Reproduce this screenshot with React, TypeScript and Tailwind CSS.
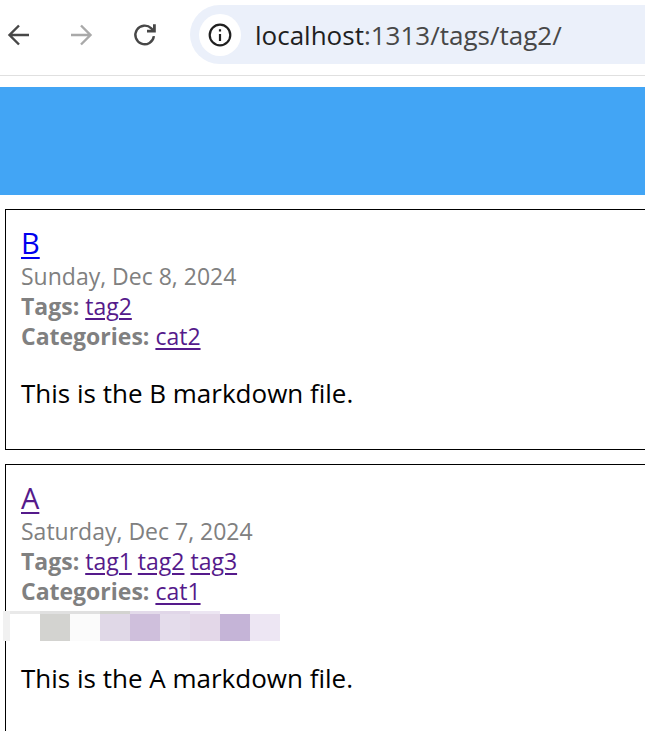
import type { ReactNode } from "react";

const topCells = [
  "w-[30px] bg-[#e9e9e9]",
  "w-[60px] bg-[#e0e0e0]",
  "w-[30px] bg-[#d3d3d0]",
  "w-[30px] bg-[#e3daea]",
  "w-[30px] bg-[#e0d6e8]",
  "w-[30px] bg-[#ece5f2]",
];

const cells = [
  "bg-white",
  "bg-[#d3d3d0]",
  "bg-[#fbfbfb]",
  "bg-[#e0d8e7]",
  "bg-[#cfbfdc]",
  "bg-[#e4dceb]",
  "bg-[#e3d7e8]",
  "bg-[#c5b4d7]",
  "bg-[#ede6f3]",
];

function Mosaic() {
  return (
    <div className="relative h-[30px]">
      <div className="absolute top-[5px] -left-[18px] flex h-[30px]" aria-hidden="true">
        <div className="w-[7px] bg-[#f1f1f1]" />
        <div>
          <div className="flex h-[3px] w-[270px] bg-white">
            {topCells.map((c) => (
              <div key={c} className={c} />
            ))}
          </div>
          <div className="flex h-[27px]">
            {cells.map((c) => (
              <div key={c} className={`w-[30px] ${c}`} />
            ))}
          </div>
        </div>
      </div>
    </div>
  );
}

function TermLinks({ label, base, terms }: { label: string; base: string; terms: string[] }) {
  return (
    <div className="flex gap-1.5">
      <strong className="font-bold">{label}:</strong>
      {terms.map((t) => (
        <a key={t} href={`#/${base}/${t}`} className="text-[#551a8b] underline decoration-2 underline-offset-3">
          {t}
        </a>
      ))}
    </div>
  );
}

type PostProps = {
  title: string;
  titleColor: string;
  date: string;
  tags: string[];
  categories: string[];
  children?: ReactNode;
};

function Post({ title, titleColor, date, tags, categories, children }: PostProps) {
  return (
    <article className="ml-[5px] border-y border-l border-black px-[15px] pt-[15px] pb-[38px]">
      <h2 className="text-[29px] leading-9">
        <a href={`#/${title}`} className={`underline decoration-2 underline-offset-3 ${titleColor}`}>
          {title}
        </a>
      </h2>
      <div className="text-[23px] leading-[30px] text-[#808080]">
        <div>{date}</div>
        <TermLinks label="Tags" base="tags" terms={tags} />
        <TermLinks label="Categories" base="categories" terms={categories} />
        {children}
      </div>
      <p className="mt-6 text-[26px] leading-9">This is the {title} markdown file.</p>
    </article>
  );
}

export default function App() {
  return (
    <div className="h-screen overflow-hidden bg-white font-['Segoe_UI','Open_Sans',sans-serif] text-black">
      <header className="flex h-[76px] items-start border-b border-[#e0e0e0] pt-[5px]">
        <nav className="flex h-[59px] flex-1 items-center">
          <div className="flex w-[190px] shrink-0 items-center gap-[35px] pl-1">
            <button type="button" aria-label="Back" className="text-[#474747]">
              <svg viewBox="0 0 28 28" className="size-7" fill="none" stroke="currentColor" strokeWidth="2.4">
                <path d="M25 14H6M15 4.5 5.5 14l9.5 9.5" />
              </svg>
            </button>
            <button type="button" aria-label="Forward" className="text-[#a9a9a9]">
              <svg viewBox="0 0 28 28" className="size-7" fill="none" stroke="currentColor" strokeWidth="2.4">
                <path d="M4 14h19M14 4.5l9.5 9.5-9.5 9.5" />
              </svg>
            </button>
            <button type="button" aria-label="Reload" className="text-[#474747]">
              <svg viewBox="0 0 28 28" className="size-7" fill="none" stroke="currentColor" strokeWidth="2.4">
                <path d="M23.9 15.2A9.3 9.3 0 1 1 21.3 7.4L23.6 9.8" />
                <path d="M24.4 3.2v6.9H17" strokeWidth="2.8" />
              </svg>
            </button>
          </div>
          <div className="flex h-[59px] flex-1 items-center gap-[14px] rounded-l-full bg-[#ebf0fa] pl-[9px]">
            <button
              type="button"
              aria-label="Site information"
              className="flex size-[42px] items-center justify-center rounded-full bg-white text-[#1f1f1f]"
            >
              <svg viewBox="0 0 24 24" className="size-6" fill="none" stroke="currentColor" strokeWidth="2.2">
                <circle cx="12" cy="12" r="10.3" />
                <path d="M12 11v7M12 6.2v2.2" />
              </svg>
            </button>
            <a href="#/tags/tag2" className="text-[26px] leading-9 text-[#474747]">
              <span className="text-[#1f1f1f]">localhost</span>:1313/tags/tag2/
            </a>
          </div>
        </nav>
      </header>
      <main className="pt-[11px]">
        <div className="h-[108px] bg-[#42a5f5]" />
        <div className="mt-[14px] flex flex-col gap-[14px]">
          <Post
            title="B"
            titleColor="text-[#0000ee]"
            date="Sunday, Dec 8, 2024"
            tags={["tag2"]}
            categories={["cat2"]}
          />
          <Post
            title="A"
            titleColor="text-[#551a8b]"
            date="Saturday, Dec 7, 2024"
            tags={["tag1", "tag2", "tag3"]}
            categories={["cat1"]}
          >
            <Mosaic />
          </Post>
        </div>
      </main>
    </div>
  );
}
